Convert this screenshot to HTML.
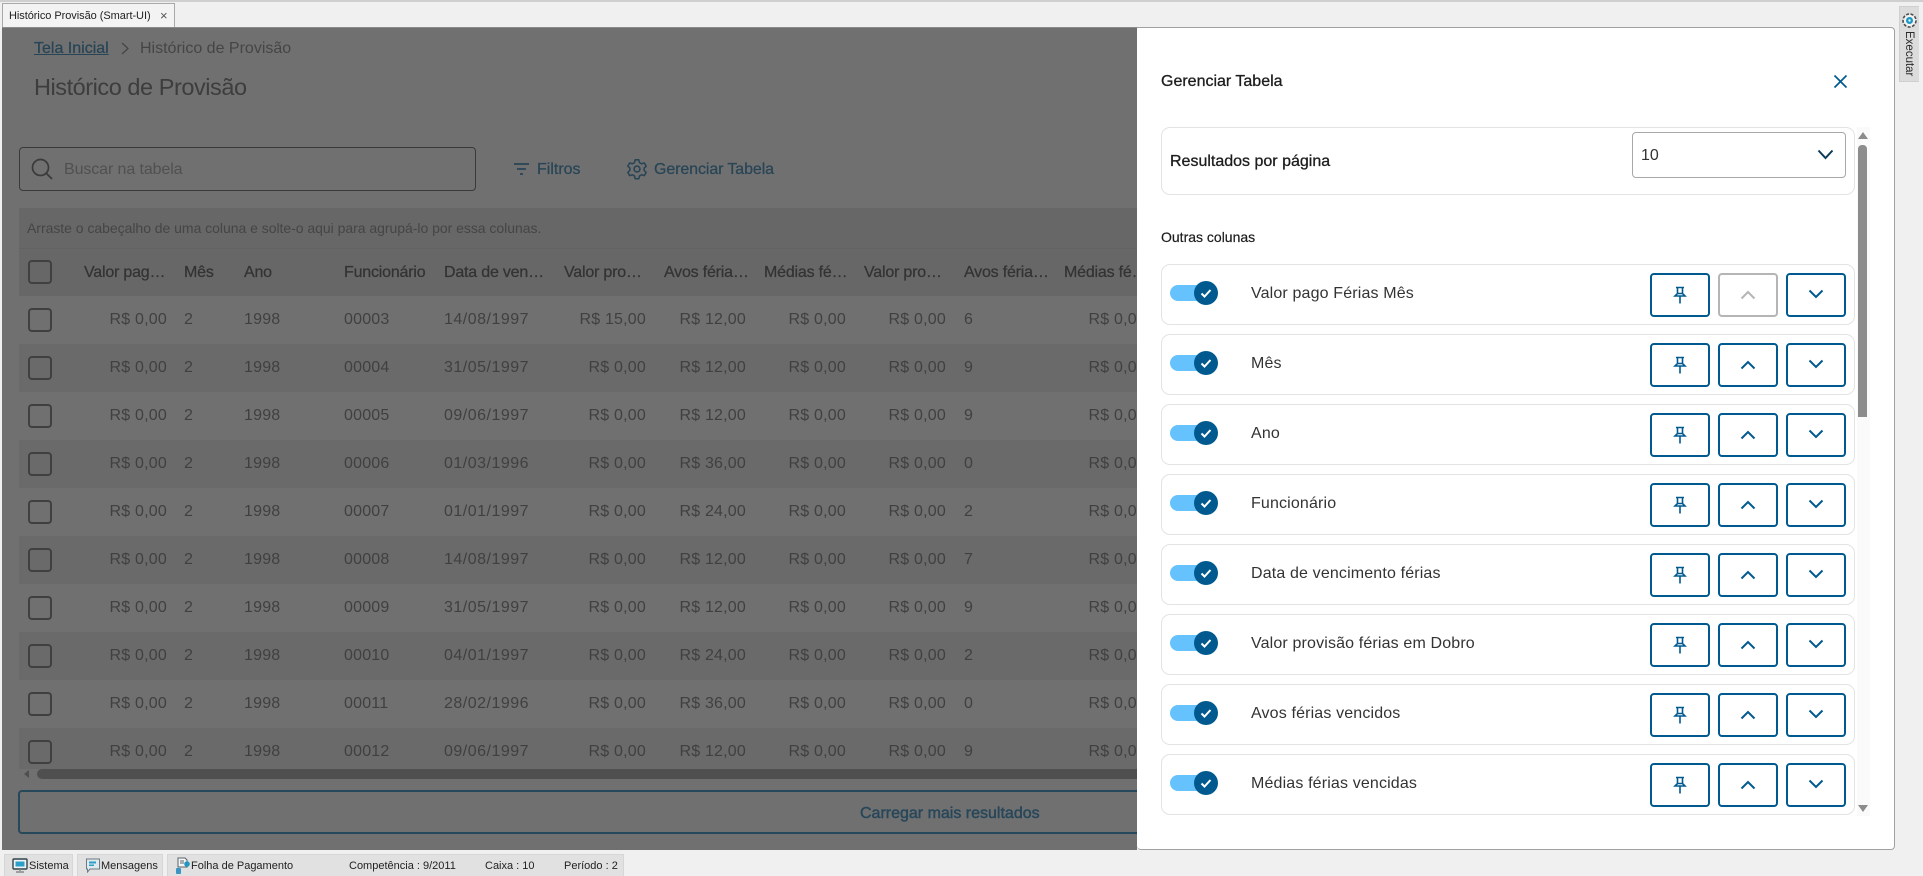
<!DOCTYPE html>
<html lang="pt"><head><meta charset="utf-8"><title>Histórico de Provisão</title>
<style>
*{box-sizing:border-box}
html,body{margin:0;padding:0;width:1923px;height:876px;overflow:hidden;background:#f0f0f0;font-family:"Liberation Sans",sans-serif}
.a{position:absolute;white-space:nowrap}
#topline{left:0;top:0;width:1923px;height:2px;background:#cfcfcf}
#tab{left:2px;top:3px;width:173px;height:25px;background:#f3f3f3;border:1px solid #a9a9a9;border-bottom:0;font:11px/24px "Liberation Sans",sans-serif;letter-spacing:-.05px;color:#222;padding-left:6px}
#main{left:2px;top:27px;width:1135px;height:823px;background:#707070;border-top:1px solid #8a8a8a;overflow:hidden}
.m{position:absolute;white-space:nowrap}
.rows{position:absolute;left:17px;width:1118px;height:48px;overflow:hidden}
.rows span{position:absolute;top:0;line-height:48px;font-size:16px;color:#404040;letter-spacing:.2px}
.r{text-align:right;width:100px}
.cb{position:absolute;left:9px;top:12px;width:24px;height:24px;border:2px solid #404040;border-radius:4px}
.rows span.h{top:1px;color:#333;-webkit-text-stroke:.25px #333;letter-spacing:-.2px}
#panel{left:1137px;top:27px;width:758px;height:823px;background:#fff;border-right:1px solid #a0a0a0;border-bottom:1px solid #a0a0a0;border-top:1px solid #a0a0a0;border-radius:0 4px 4px 4px}
.card{position:absolute;left:1161px;width:694px;height:61px;border:1px solid #e3e3e3;border-radius:9px;background:#fff}
.tog{position:absolute;left:1170px;width:36px;height:16px;border-radius:8px;background:#66c2fd}
.knob{position:absolute;left:1194px;width:24px;height:24px;border-radius:50%;background:#005a8f}
.lbl{position:absolute;left:1251px;font-size:16px;line-height:20px;color:#333;letter-spacing:.15px;white-space:nowrap;margin-top:1px}
.btn{position:absolute;width:60px;height:44px;border:2px solid #005a8f;border-radius:4px;background:#fff}
.dis{border-color:#b5b5b5}
.st{position:absolute;top:854px;height:22px;background:#e1e1e1;border:1px solid #d6d6d6;border-bottom:0}
.stx{position:absolute;top:859px;font:11px/14px "Liberation Sans",sans-serif;color:#222;white-space:nowrap}
</style></head><body>
<div class="a" id="topline"></div>
<div class="a" id="tab">Histórico Provisão (Smart-UI)<span class="a" style="left:157px;top:0;color:#555;font-size:13px">×</span></div>

<div class="a" id="main">
 <div class="m" style="left:32px;top:11px;font-size:16px;line-height:20px;color:#284556;text-decoration:underline;-webkit-text-stroke:.25px #284556">Tela Inicial</div>
 <svg class="m" style="left:118px;top:13px" width="10" height="16" viewBox="0 0 10 16"><path d="M2 2l6 5.500-6 5.500" fill="none" stroke="#444" stroke-width="1.200"/></svg>
 <div class="m" style="left:138px;top:11px;font-size:16px;line-height:20px;color:#454545">Histórico de Provisão</div>
 <div class="m" style="left:32px;top:43px;font-size:23.5px;line-height:32px;color:#3d3d3d;letter-spacing:-.45px">Histórico de Provisão</div>

 <div class="m" style="left:17px;top:119px;width:457px;height:44px;border:1px solid #3a3a3a;border-radius:4px"></div>
 <svg class="m" style="left:28px;top:129px" width="24" height="24" viewBox="0 0 24 24"><circle cx="10.500" cy="10.500" r="8" fill="none" stroke="#3a3a3a" stroke-width="1.700"/><path d="M16 16l6 6" stroke="#3a3a3a" stroke-width="1.700" fill="none"/></svg>
 <div class="m" style="left:62px;top:132px;font-size:16px;line-height:20px;color:#505050;letter-spacing:-.1px">Buscar na tabela</div>
 <svg class="m" style="left:511px;top:133px" width="18" height="16" viewBox="0 0 18 16"><path d="M1 3h15M4 8h9M7 13h3" stroke="#284556" stroke-width="1.800" fill="none"/></svg>
 <div class="m" style="left:535px;top:132px;font-size:16px;line-height:20px;color:#284556;-webkit-text-stroke:.25px #284556">Filtros</div>
 <svg class="m" style="left:624px;top:130px" width="22" height="22" viewBox="0 0 24 24"><path d="M10 2h4l.7 3 2.300 1.300 3-.9 2 3.500-2.200 2.100v2.600l2.200 2.100-2 3.500-3-.9-2.300 1.300-.7 3h-4l-.7-3-2.300-1.300-3 .9-2-3.500 2.200-2.100v-2.600l-2.200-2.100 2-3.500 3 .9 2.300-1.300z" fill="none" stroke="#284556" stroke-width="1.700" stroke-linejoin="round"/><circle cx="12" cy="12" r="3.200" fill="none" stroke="#284556" stroke-width="1.700"/></svg>
 <div class="m" style="left:652px;top:132px;font-size:16px;line-height:20px;color:#284556;letter-spacing:-.1px;-webkit-text-stroke:.25px #284556">Gerenciar Tabela</div>

 <div class="m" style="left:17px;top:180px;width:1118px;height:88px;background:#676767"></div>
 <div class="m" style="left:17px;top:220px;width:1118px;height:1px;background:#626262"></div>
 <div class="m" style="left:25px;top:192px;font-size:14px;line-height:17px;color:#454545;letter-spacing:-.03px">Arraste o cabeçalho de uma coluna e solte-o aqui para agrupá-lo por essa colunas.</div>

 <div class="rows" style="top:220px;height:48px">
  <div class="cb"></div>
  <span class="h" style="left:65px">Valor pag…</span><span class="h" style="left:165px">Mês</span><span class="h" style="left:225px">Ano</span><span class="h" style="left:325px">Funcionário</span><span class="h" style="left:425px">Data de ven…</span><span class="h" style="left:545px">Valor pro…</span><span class="h" style="left:645px">Avos féria…</span><span class="h" style="left:745px">Médias fé…</span><span class="h" style="left:845px">Valor pro…</span><span class="h" style="left:945px">Avos féria…</span><span class="h" style="left:1045px">Médias fé…</span>
 </div>

 <div class="rows" style="top:268px"><div class="cb"></div><span class="r" style="left:48px">R$ 0,00</span><span style="left:165px">2</span><span style="left:225px">1998</span><span style="left:325px">00003</span><span style="left:425px;letter-spacing:.5px">14/08/1997</span><span class="r" style="left:527px">R$ 15,00</span><span class="r" style="left:627px">R$ 12,00</span><span class="r" style="left:727px">R$ 0,00</span><span class="r" style="left:827px">R$ 0,00</span><span style="left:945px">6</span><span class="r" style="left:1027px">R$ 0,00</span></div>
 <div class="rows" style="top:316px;background:#6a6a6a"><div class="cb"></div><span class="r" style="left:48px">R$ 0,00</span><span style="left:165px">2</span><span style="left:225px">1998</span><span style="left:325px">00004</span><span style="left:425px;letter-spacing:.5px">31/05/1997</span><span class="r" style="left:527px">R$ 0,00</span><span class="r" style="left:627px">R$ 12,00</span><span class="r" style="left:727px">R$ 0,00</span><span class="r" style="left:827px">R$ 0,00</span><span style="left:945px">9</span><span class="r" style="left:1027px">R$ 0,00</span></div>
 <div class="rows" style="top:364px"><div class="cb"></div><span class="r" style="left:48px">R$ 0,00</span><span style="left:165px">2</span><span style="left:225px">1998</span><span style="left:325px">00005</span><span style="left:425px;letter-spacing:.5px">09/06/1997</span><span class="r" style="left:527px">R$ 0,00</span><span class="r" style="left:627px">R$ 12,00</span><span class="r" style="left:727px">R$ 0,00</span><span class="r" style="left:827px">R$ 0,00</span><span style="left:945px">9</span><span class="r" style="left:1027px">R$ 0,00</span></div>
 <div class="rows" style="top:412px;background:#6a6a6a"><div class="cb"></div><span class="r" style="left:48px">R$ 0,00</span><span style="left:165px">2</span><span style="left:225px">1998</span><span style="left:325px">00006</span><span style="left:425px;letter-spacing:.5px">01/03/1996</span><span class="r" style="left:527px">R$ 0,00</span><span class="r" style="left:627px">R$ 36,00</span><span class="r" style="left:727px">R$ 0,00</span><span class="r" style="left:827px">R$ 0,00</span><span style="left:945px">0</span><span class="r" style="left:1027px">R$ 0,00</span></div>
 <div class="rows" style="top:460px"><div class="cb"></div><span class="r" style="left:48px">R$ 0,00</span><span style="left:165px">2</span><span style="left:225px">1998</span><span style="left:325px">00007</span><span style="left:425px;letter-spacing:.5px">01/01/1997</span><span class="r" style="left:527px">R$ 0,00</span><span class="r" style="left:627px">R$ 24,00</span><span class="r" style="left:727px">R$ 0,00</span><span class="r" style="left:827px">R$ 0,00</span><span style="left:945px">2</span><span class="r" style="left:1027px">R$ 0,00</span></div>
 <div class="rows" style="top:508px;background:#6a6a6a"><div class="cb"></div><span class="r" style="left:48px">R$ 0,00</span><span style="left:165px">2</span><span style="left:225px">1998</span><span style="left:325px">00008</span><span style="left:425px;letter-spacing:.5px">14/08/1997</span><span class="r" style="left:527px">R$ 0,00</span><span class="r" style="left:627px">R$ 12,00</span><span class="r" style="left:727px">R$ 0,00</span><span class="r" style="left:827px">R$ 0,00</span><span style="left:945px">7</span><span class="r" style="left:1027px">R$ 0,00</span></div>
 <div class="rows" style="top:556px"><div class="cb"></div><span class="r" style="left:48px">R$ 0,00</span><span style="left:165px">2</span><span style="left:225px">1998</span><span style="left:325px">00009</span><span style="left:425px;letter-spacing:.5px">31/05/1997</span><span class="r" style="left:527px">R$ 0,00</span><span class="r" style="left:627px">R$ 12,00</span><span class="r" style="left:727px">R$ 0,00</span><span class="r" style="left:827px">R$ 0,00</span><span style="left:945px">9</span><span class="r" style="left:1027px">R$ 0,00</span></div>
 <div class="rows" style="top:604px;background:#6a6a6a"><div class="cb"></div><span class="r" style="left:48px">R$ 0,00</span><span style="left:165px">2</span><span style="left:225px">1998</span><span style="left:325px">00010</span><span style="left:425px;letter-spacing:.5px">04/01/1997</span><span class="r" style="left:527px">R$ 0,00</span><span class="r" style="left:627px">R$ 24,00</span><span class="r" style="left:727px">R$ 0,00</span><span class="r" style="left:827px">R$ 0,00</span><span style="left:945px">2</span><span class="r" style="left:1027px">R$ 0,00</span></div>
 <div class="rows" style="top:652px"><div class="cb"></div><span class="r" style="left:48px">R$ 0,00</span><span style="left:165px">2</span><span style="left:225px">1998</span><span style="left:325px">00011</span><span style="left:425px;letter-spacing:.5px">28/02/1996</span><span class="r" style="left:527px">R$ 0,00</span><span class="r" style="left:627px">R$ 36,00</span><span class="r" style="left:727px">R$ 0,00</span><span class="r" style="left:827px">R$ 0,00</span><span style="left:945px">0</span><span class="r" style="left:1027px">R$ 0,00</span></div>
 <div class="rows" style="top:700px;background:#6a6a6a"><div class="cb"></div><span class="r" style="left:48px">R$ 0,00</span><span style="left:165px">2</span><span style="left:225px">1998</span><span style="left:325px">00012</span><span style="left:425px;letter-spacing:.5px">09/06/1997</span><span class="r" style="left:527px">R$ 0,00</span><span class="r" style="left:627px">R$ 12,00</span><span class="r" style="left:727px">R$ 0,00</span><span class="r" style="left:827px">R$ 0,00</span><span style="left:945px">9</span><span class="r" style="left:1027px">R$ 0,00</span></div>

 <div class="m" style="left:17px;top:741px;width:1118px;height:10px;background:#707070"></div>
 <div class="m" style="left:35px;top:741px;width:1100px;height:10px;background:#4f4f4f;border-radius:5px 0 0 5px"></div>
 <div class="m" style="left:22px;top:742px;width:0;height:0;border-top:4px solid transparent;border-bottom:4px solid transparent;border-right:5px solid #4f4f4f"></div>
 <div class="m" style="left:16px;top:762px;width:1125px;height:44px;border:2px solid #27475a;border-radius:4px"></div>
 <div class="m" style="left:858px;top:776px;font-size:16px;line-height:20px;color:#27475a;-webkit-text-stroke:.45px #27475a">Carregar mais resultados</div>
</div>

<div class="a" id="panel"></div>
<div class="a" style="left:1161px;top:72px;font-size:16px;line-height:20px;color:#1d1d1d;-webkit-text-stroke:.3px #1d1d1d">Gerenciar Tabela</div>
<svg class="a" style="left:1833px;top:74px" width="15" height="15" viewBox="0 0 15 15"><path d="M1.500 1.500l12 12M13.500 1.500l-12 12" stroke="#005a8f" stroke-width="1.700" fill="none"/></svg>

<div class="a" style="left:1857px;top:127px;width:13px;height:689px;background:#fafafa"></div>
<div class="a" style="left:1857.500px;top:132px;width:0;height:0;border-left:5px solid transparent;border-right:5px solid transparent;border-bottom:7px solid #8c8c8c"></div>
<div class="a" style="left:1858px;top:145px;width:9px;height:272px;background:#8c8c8c;border-radius:4px 4px 0 0"></div>
<div class="a" style="left:1857.500px;top:805px;width:0;height:0;border-left:5px solid transparent;border-right:5px solid transparent;border-top:7px solid #8c8c8c"></div>

<div class="card" style="top:127px;height:68px"></div>
<div class="a" style="left:1170px;top:152px;font-size:16px;line-height:20px;color:#1d1d1d;-webkit-text-stroke:.3px #1d1d1d">Resultados por página</div>
<div class="a" style="left:1632px;top:132px;width:214px;height:46px;border:1px solid #a8a8a8;border-radius:4px"></div>
<div class="a" style="left:1641px;top:146px;font-size:16px;line-height:20px;color:#333">10</div>
<svg class="a" style="left:1817px;top:149px" width="17" height="11" viewBox="0 0 17 11"><path d="M1.500 1.500l7 7.500 7-7.500" fill="none" stroke="#0c3b59" stroke-width="2"/></svg>
<div class="a" style="left:1161px;top:228px;font-size:14px;line-height:18px;color:#1d1d1d;-webkit-text-stroke:.2px #1d1d1d">Outras colunas</div>

<div class="card" style="top:264px"></div><div class="tog" style="top:285px"></div><div class="knob" style="top:281px"></div>
<svg class="a" style="left:1194px;top:281px" width="24" height="24" viewBox="0 0 24 24"><path d="M7.500 12.500l3 3 6-6.500" fill="none" stroke="#fff" stroke-width="2"/></svg>
<div class="lbl" style="top:283px">Valor pago Férias Mês</div>
<div class="btn" style="left:1650px;top:273px"></div><div class="btn dis" style="left:1718px;top:273px"></div><div class="btn" style="left:1786px;top:273px"></div>
<svg class="a" style="left:1672px;top:286px" width="16" height="18" viewBox="0 0 16 18"><path d="M4 1.500h8M5.500 1.500v6.500M10.500 1.500v6.500M3 10l2.500-2.500h5L13 10zM8 10v7.500" fill="none" stroke="#005a8f" stroke-width="1.600"/></svg>
<svg class="a" style="left:1740px;top:290px" width="16" height="10" viewBox="0 0 16 10"><path d="M1.500 8.500L8 2l6.500 6.500" fill="none" stroke="#b5b5b5" stroke-width="2"/></svg>
<svg class="a" style="left:1808px;top:289px" width="16" height="10" viewBox="0 0 16 10"><path d="M1.500 1.500L8 8l6.500-6.500" fill="none" stroke="#005a8f" stroke-width="2"/></svg>

<div class="card" style="top:334px"></div><div class="tog" style="top:355px"></div><div class="knob" style="top:351px"></div>
<svg class="a" style="left:1194px;top:351px" width="24" height="24" viewBox="0 0 24 24"><path d="M7.500 12.500l3 3 6-6.500" fill="none" stroke="#fff" stroke-width="2"/></svg>
<div class="lbl" style="top:353px">Mês</div>
<div class="btn" style="left:1650px;top:343px"></div><div class="btn" style="left:1718px;top:343px"></div><div class="btn" style="left:1786px;top:343px"></div>
<svg class="a" style="left:1672px;top:356px" width="16" height="18" viewBox="0 0 16 18"><path d="M4 1.500h8M5.500 1.500v6.500M10.500 1.500v6.500M3 10l2.500-2.500h5L13 10zM8 10v7.500" fill="none" stroke="#005a8f" stroke-width="1.600"/></svg>
<svg class="a" style="left:1740px;top:360px" width="16" height="10" viewBox="0 0 16 10"><path d="M1.500 8.500L8 2l6.500 6.500" fill="none" stroke="#005a8f" stroke-width="2"/></svg>
<svg class="a" style="left:1808px;top:359px" width="16" height="10" viewBox="0 0 16 10"><path d="M1.500 1.500L8 8l6.500-6.500" fill="none" stroke="#005a8f" stroke-width="2"/></svg>

<div class="card" style="top:404px"></div><div class="tog" style="top:425px"></div><div class="knob" style="top:421px"></div>
<svg class="a" style="left:1194px;top:421px" width="24" height="24" viewBox="0 0 24 24"><path d="M7.500 12.500l3 3 6-6.500" fill="none" stroke="#fff" stroke-width="2"/></svg>
<div class="lbl" style="top:423px">Ano</div>
<div class="btn" style="left:1650px;top:413px"></div><div class="btn" style="left:1718px;top:413px"></div><div class="btn" style="left:1786px;top:413px"></div>
<svg class="a" style="left:1672px;top:426px" width="16" height="18" viewBox="0 0 16 18"><path d="M4 1.500h8M5.500 1.500v6.500M10.500 1.500v6.500M3 10l2.500-2.500h5L13 10zM8 10v7.500" fill="none" stroke="#005a8f" stroke-width="1.600"/></svg>
<svg class="a" style="left:1740px;top:430px" width="16" height="10" viewBox="0 0 16 10"><path d="M1.500 8.500L8 2l6.500 6.500" fill="none" stroke="#005a8f" stroke-width="2"/></svg>
<svg class="a" style="left:1808px;top:429px" width="16" height="10" viewBox="0 0 16 10"><path d="M1.500 1.500L8 8l6.500-6.500" fill="none" stroke="#005a8f" stroke-width="2"/></svg>

<div class="card" style="top:474px"></div><div class="tog" style="top:495px"></div><div class="knob" style="top:491px"></div>
<svg class="a" style="left:1194px;top:491px" width="24" height="24" viewBox="0 0 24 24"><path d="M7.500 12.500l3 3 6-6.500" fill="none" stroke="#fff" stroke-width="2"/></svg>
<div class="lbl" style="top:493px">Funcionário</div>
<div class="btn" style="left:1650px;top:483px"></div><div class="btn" style="left:1718px;top:483px"></div><div class="btn" style="left:1786px;top:483px"></div>
<svg class="a" style="left:1672px;top:496px" width="16" height="18" viewBox="0 0 16 18"><path d="M4 1.500h8M5.500 1.500v6.500M10.500 1.500v6.500M3 10l2.500-2.500h5L13 10zM8 10v7.500" fill="none" stroke="#005a8f" stroke-width="1.600"/></svg>
<svg class="a" style="left:1740px;top:500px" width="16" height="10" viewBox="0 0 16 10"><path d="M1.500 8.500L8 2l6.500 6.500" fill="none" stroke="#005a8f" stroke-width="2"/></svg>
<svg class="a" style="left:1808px;top:499px" width="16" height="10" viewBox="0 0 16 10"><path d="M1.500 1.500L8 8l6.500-6.500" fill="none" stroke="#005a8f" stroke-width="2"/></svg>

<div class="card" style="top:544px"></div><div class="tog" style="top:565px"></div><div class="knob" style="top:561px"></div>
<svg class="a" style="left:1194px;top:561px" width="24" height="24" viewBox="0 0 24 24"><path d="M7.500 12.500l3 3 6-6.500" fill="none" stroke="#fff" stroke-width="2"/></svg>
<div class="lbl" style="top:563px">Data de vencimento férias</div>
<div class="btn" style="left:1650px;top:553px"></div><div class="btn" style="left:1718px;top:553px"></div><div class="btn" style="left:1786px;top:553px"></div>
<svg class="a" style="left:1672px;top:566px" width="16" height="18" viewBox="0 0 16 18"><path d="M4 1.500h8M5.500 1.500v6.500M10.500 1.500v6.500M3 10l2.500-2.500h5L13 10zM8 10v7.500" fill="none" stroke="#005a8f" stroke-width="1.600"/></svg>
<svg class="a" style="left:1740px;top:570px" width="16" height="10" viewBox="0 0 16 10"><path d="M1.500 8.500L8 2l6.500 6.500" fill="none" stroke="#005a8f" stroke-width="2"/></svg>
<svg class="a" style="left:1808px;top:569px" width="16" height="10" viewBox="0 0 16 10"><path d="M1.500 1.500L8 8l6.500-6.500" fill="none" stroke="#005a8f" stroke-width="2"/></svg>

<div class="card" style="top:614px"></div><div class="tog" style="top:635px"></div><div class="knob" style="top:631px"></div>
<svg class="a" style="left:1194px;top:631px" width="24" height="24" viewBox="0 0 24 24"><path d="M7.500 12.500l3 3 6-6.500" fill="none" stroke="#fff" stroke-width="2"/></svg>
<div class="lbl" style="top:633px">Valor provisão férias em Dobro</div>
<div class="btn" style="left:1650px;top:623px"></div><div class="btn" style="left:1718px;top:623px"></div><div class="btn" style="left:1786px;top:623px"></div>
<svg class="a" style="left:1672px;top:636px" width="16" height="18" viewBox="0 0 16 18"><path d="M4 1.500h8M5.500 1.500v6.500M10.500 1.500v6.500M3 10l2.500-2.500h5L13 10zM8 10v7.500" fill="none" stroke="#005a8f" stroke-width="1.600"/></svg>
<svg class="a" style="left:1740px;top:640px" width="16" height="10" viewBox="0 0 16 10"><path d="M1.500 8.500L8 2l6.500 6.500" fill="none" stroke="#005a8f" stroke-width="2"/></svg>
<svg class="a" style="left:1808px;top:639px" width="16" height="10" viewBox="0 0 16 10"><path d="M1.500 1.500L8 8l6.500-6.500" fill="none" stroke="#005a8f" stroke-width="2"/></svg>

<div class="card" style="top:684px"></div><div class="tog" style="top:705px"></div><div class="knob" style="top:701px"></div>
<svg class="a" style="left:1194px;top:701px" width="24" height="24" viewBox="0 0 24 24"><path d="M7.500 12.500l3 3 6-6.500" fill="none" stroke="#fff" stroke-width="2"/></svg>
<div class="lbl" style="top:703px">Avos férias vencidos</div>
<div class="btn" style="left:1650px;top:693px"></div><div class="btn" style="left:1718px;top:693px"></div><div class="btn" style="left:1786px;top:693px"></div>
<svg class="a" style="left:1672px;top:706px" width="16" height="18" viewBox="0 0 16 18"><path d="M4 1.500h8M5.500 1.500v6.500M10.500 1.500v6.500M3 10l2.500-2.500h5L13 10zM8 10v7.500" fill="none" stroke="#005a8f" stroke-width="1.600"/></svg>
<svg class="a" style="left:1740px;top:710px" width="16" height="10" viewBox="0 0 16 10"><path d="M1.500 8.500L8 2l6.500 6.500" fill="none" stroke="#005a8f" stroke-width="2"/></svg>
<svg class="a" style="left:1808px;top:709px" width="16" height="10" viewBox="0 0 16 10"><path d="M1.500 1.500L8 8l6.500-6.500" fill="none" stroke="#005a8f" stroke-width="2"/></svg>

<div class="card" style="top:754px"></div><div class="tog" style="top:775px"></div><div class="knob" style="top:771px"></div>
<svg class="a" style="left:1194px;top:771px" width="24" height="24" viewBox="0 0 24 24"><path d="M7.500 12.500l3 3 6-6.500" fill="none" stroke="#fff" stroke-width="2"/></svg>
<div class="lbl" style="top:773px">Médias férias vencidas</div>
<div class="btn" style="left:1650px;top:763px"></div><div class="btn" style="left:1718px;top:763px"></div><div class="btn" style="left:1786px;top:763px"></div>
<svg class="a" style="left:1672px;top:776px" width="16" height="18" viewBox="0 0 16 18"><path d="M4 1.500h8M5.500 1.500v6.500M10.500 1.500v6.500M3 10l2.500-2.500h5L13 10zM8 10v7.500" fill="none" stroke="#005a8f" stroke-width="1.600"/></svg>
<svg class="a" style="left:1740px;top:780px" width="16" height="10" viewBox="0 0 16 10"><path d="M1.500 8.500L8 2l6.500 6.500" fill="none" stroke="#005a8f" stroke-width="2"/></svg>
<svg class="a" style="left:1808px;top:779px" width="16" height="10" viewBox="0 0 16 10"><path d="M1.500 1.500L8 8l6.500-6.500" fill="none" stroke="#005a8f" stroke-width="2"/></svg>

<div class="a" style="left:1899px;top:6px;width:20px;height:76px;background:#dcdcdc;border:1px solid #cfcfcf;border-right:0"></div>
<svg class="a" style="left:1901px;top:12px" width="17" height="17" viewBox="0 0 17 17"><circle cx="8.500" cy="8.500" r="6.500" fill="#f2f2f2" stroke="#4c4c4c" stroke-width="1.600" stroke-dasharray="3 1.500"/><circle cx="8.500" cy="8.500" r="3.500" fill="#1f97c0"/><circle cx="8.500" cy="8.500" r="1.200" fill="#dff"/></svg>
<div class="a" style="left:1902px;top:31px;writing-mode:vertical-rl;font-size:11.5px;line-height:14px;color:#2a2a2a">Executar</div>

<div class="st" style="left:4px;width:69px"></div>
<svg class="a" style="left:12px;top:858px" width="16" height="15" viewBox="0 0 16 15"><rect x="1" y="1" width="14" height="10" rx="1" fill="#eef3f6" stroke="#33424d" stroke-width="1.400"/><rect x="3.500" y="3.500" width="9" height="5" fill="#2aa0c8"/><path d="M8 11v2M4 14h8" stroke="#888" stroke-width="1.500"/></svg>
<div class="stx" style="left:29px">Sistema</div>
<div class="st" style="left:77px;width:86px"></div>
<svg class="a" style="left:85px;top:858px" width="16" height="15" viewBox="0 0 16 15"><path d="M1.500 1h13v10H5l-2.500 3v-3h-1z" fill="#dfe9ee" stroke="#6d7a83"/><rect x="4" y="3.500" width="7" height="2" fill="#2aa0c8"/><rect x="4" y="6.500" width="5" height="1.500" fill="#2aa0c8"/></svg>
<div class="stx" style="left:101px">Mensagens</div>
<div class="st" style="left:167px;width:457px"></div>
<svg class="a" style="left:174px;top:857px" width="17" height="18" viewBox="0 0 17 18"><path d="M4 1h7l2 2v7H4z" fill="#f6f6f6" stroke="#55626b"/><path d="M6 4h4M6 6h4" stroke="#55626b"/><circle cx="13" cy="7" r="2.800" fill="#1f97c0"/><rect x="2" y="11" width="5" height="6" rx="1" fill="#3a94c4"/></svg>
<div class="stx" style="left:191px">Folha de Pagamento</div>
<div class="stx" style="left:349px">Competência : 9/2011</div>
<div class="stx" style="left:485px">Caixa : 10</div>
<div class="stx" style="left:564px">Período : 2</div>
</body></html>
